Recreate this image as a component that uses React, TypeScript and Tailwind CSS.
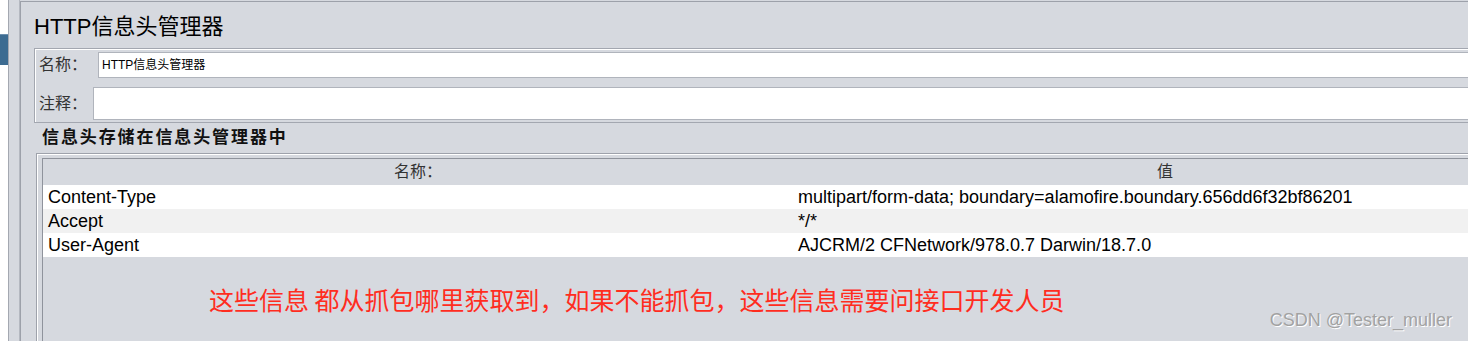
const sans = "font-['Liberation_Sans','Noto_Sans_CJK_SC',sans-serif]"

const rows = [
  { name: 'Content-Type', value: 'multipart/form-data; boundary=alamofire.boundary.656dd6f32bf86201' },
  { name: 'Accept', value: '*/*' },
  { name: 'User-Agent', value: 'AJCRM/2 CFNetwork/978.0.7 Darwin/18.7.0' },
]

export default function App() {
  return (
    <div className={`relative w-[1468px] h-[341px] overflow-hidden bg-[#d6d9df] flex ${sans}`}>
      {/* tree panel edge */}
      <div className="w-[9px] flex flex-col border-r border-[#a4a8b1]">
        <div className="h-[34px] bg-white" />
        <div className="h-[31px] bg-[#3c6b91] border-t border-[#6b8fae]" />
        <div className="flex-1 bg-white" />
      </div>
      <div className="w-[11px] border-r border-[#b4b8c0]" />

      {/* main panel */}
      <div className="flex-1 min-w-0 mt-px border-l border-t border-[#9da1aa] pl-[13px] text-black">
        <div className="h-[46px] flex items-center pt-[3px] text-[22px] leading-none">
          HTTP信息头管理器
        </div>

        <div className="w-[1500px] h-[75px] border border-[#a3a7b0] shadow-[inset_1px_1px_0_#ffffff] pl-[3px] pt-[3px] flex flex-col">
          <div className="flex items-center h-[26px]">
            <span className="w-[60px] pl-[1px] text-[16px] text-[#333]">名称：</span>
            <div className="flex-1 h-[26px] bg-white border border-[#b0b4bc] flex items-center pl-[3px] text-[12px]">
              HTTP信息头管理器
            </div>
          </div>
          <div className="flex items-center h-[33px] mt-[9px]">
            <span className="w-[55px] pl-[1px] text-[16px] text-[#333]">注释：</span>
            <div className="flex-1 h-[33px] bg-white border border-[#b0b4bc]" />
          </div>
        </div>

        <div className="h-[30px] flex items-center pl-[8px] text-[17px] font-bold tracking-[1.9px] text-[#111]">
          信息头存储在信息头管理器中
        </div>

        <div className="ml-[2px] w-[1520px] h-[200px] border-l border-t border-[#9ea2ab] shadow-[inset_1px_1px_0_#ffffff] pl-[5px] pt-[4px]">
          <div className="h-full border-l border-t border-[#8f939c]">
            <div className="grid grid-cols-[750px_744px] h-[26px] items-center text-[16px] text-[#333]">
              <div className="text-center">名称：</div>
              <div className="text-center">值</div>
            </div>
            {rows.map((r, i) => (
              <div
                key={r.name}
                className={`grid grid-cols-[750px_744px] h-[24px] items-center text-[18px] leading-none ${i === 1 ? 'bg-[#f1f1f1]' : 'bg-white'}`}
              >
                <div className="pl-[5px]">{r.name}</div>
                <div className="pl-[5px]">{r.value}</div>
              </div>
            ))}
            <div className="mt-[26px] pl-[166px] h-[34px] flex items-center text-[25px] text-[#ff2d1f] font-['Noto_Sans_CJK_SC',sans-serif]">
              这些信息 都从抓包哪里获取到，如果不能抓包，这些信息需要问接口开发人员
            </div>
          </div>
        </div>
      </div>

      <div className="absolute right-[16px] bottom-[7px] text-[18px] text-[#a2a2a2] [text-shadow:1px_1px_0_#ffffff]">
        CSDN @Tester_muller
      </div>
    </div>
  )
}
